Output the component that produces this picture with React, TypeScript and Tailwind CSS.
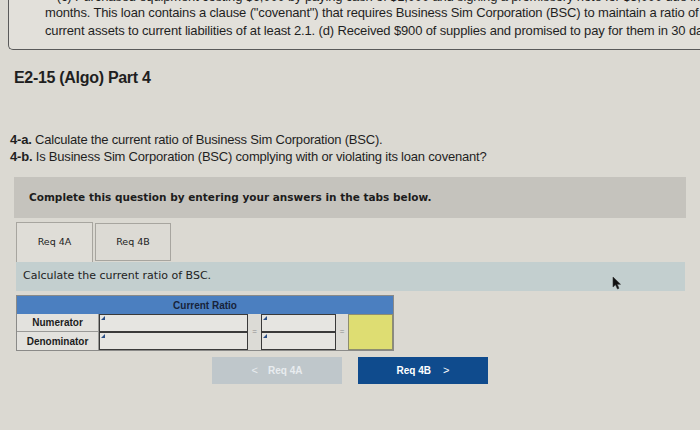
import React from "react";

function Cursor() {
  return (
    <svg width="10" height="14" viewBox="0 0 10 14" className="absolute left-[612px] top-[276px]">
      <path d="M1 1 L1 11 L3.5 8.8 L5.5 13 L7 12.3 L5.2 8.3 L8.5 8.3 Z" fill="#111" stroke="#333" strokeWidth="0.6" />
    </svg>
  );
}

function InputCell({ className }: { className?: string }) {
  return (
    <div className={"relative border-[1.5px] border-[#3a3a3a] bg-[#e6e5e1] " + (className ?? "")}>
      <div className="absolute left-[1px] top-[1px] h-0 w-0 rotate-90 border-l-[4px] border-t-[4px] border-l-transparent border-t-[#2b4f86]" />
    </div>
  );
}

export default function App() {
  return (
    <div className="relative h-[430px] w-[700px] overflow-hidden bg-[#dbd9d2] font-['Liberation_Sans',Arial,sans-serif] text-[#1f1f1f]">
      {/* problem statement box (clipped at top) */}
      <div className="-mr-6 ml-[8px] h-[50px] overflow-hidden rounded-bl-[5px] border-b-[1.5px] border-l-[1.5px] border-[#5a5a5a] bg-[#e2e0da] pl-[36px]">
        <div className="-mt-[12px] text-[13px] leading-[18px] tracking-[-0.15px]">
          <div className="flex justify-end whitespace-nowrap pr-[24px]">
            (c) Purchased equipment costing $6,000 by paying cash of $1,000 and signing a promissory note for $5,000 due in
          </div>
          <div className="-mt-[2px] whitespace-nowrap">
            months. This loan contains a clause ("covenant") that requires Business Sim Corporation (BSC) to maintain a ratio of
          </div>
          <div className="whitespace-nowrap">
            current assets to current liabilities of at least 2.1. (d) Received $900 of supplies and promised to pay for them in 30 days.
          </div>
        </div>
      </div>

      <div className="pl-[14px] pt-[19px] text-[16px] font-bold leading-[18px] tracking-[-0.3px]">E2-15 (Algo) Part 4</div>

      <div className="pl-[10px] pt-[44px] text-[13px] leading-[17px] tracking-[-0.2px]">
        <div>
          <span className="font-bold">4-a.</span> Calculate the current ratio of Business Sim Corporation (BSC).
        </div>
        <div>
          <span className="font-bold">4-b.</span> Is Business Sim Corporation (BSC) complying with or violating its loan covenant?
        </div>
      </div>

      <div className="ml-[14px] mr-[14px] mt-[12px] flex h-[41px] items-center bg-[#c5c3bd] pl-[15px] font-['DejaVu_Sans',Verdana,sans-serif] text-[10.5px] font-bold text-[#1c1c1c]">
        Complete this question by entering your answers in the tabs below.
      </div>

      <div className="ml-[16px] mr-[15px] mt-[4px] flex items-end gap-[2px] font-['DejaVu_Sans',Verdana,sans-serif] text-[9.5px] text-[#222]">
        <div className="flex h-[40px] w-[77px] items-center justify-center border border-b-0 border-[#a7a59f] bg-[#dfddd7]">Req 4A</div>
        <div className="mb-[1px] flex h-[38px] w-[76px] items-center justify-center border border-[#a7a59f] bg-[#dcdad4]">Req 4B</div>
      </div>

      <div className="ml-[16px] mr-[15px] flex h-[29px] items-center bg-[#c3cfcf] pl-[7px] font-['DejaVu_Sans',Verdana,sans-serif] text-[11px] text-[#222]">
        Calculate the current ratio of BSC.
      </div>

      {/* ratio table */}
      <div className="ml-[16px] mt-[4px] w-[378px] border border-[#8a8a88]">
        <div className="flex h-[18px] items-center justify-center bg-[#4b7fc0] text-[10px] font-bold text-[#17233a]">Current Ratio</div>
        <div className="grid grid-cols-[82px_149px_13px_75px_12px_1fr] grid-rows-[18px_18px] text-[10px] font-bold text-[#1c1c1c]">
          <div className="flex items-center justify-center border-b border-r border-[#9a9a98] bg-[#e3e2de]">Numerator</div>
          <InputCell />
          <div className="row-span-2 flex items-center justify-center bg-[#dcdbd6] text-[8px] font-normal text-[#8a8a8a]">=</div>
          <InputCell />
          <div className="row-span-2 flex items-center justify-center bg-[#dcdbd6] text-[8px] font-normal text-[#8a8a8a]">=</div>
          <div className="row-span-2 border border-[#8d8d70] bg-[#dedd72]" />
          <div className="flex items-center justify-center border-r border-[#9a9a98] bg-[#e3e2de]">Denominator</div>
          <InputCell />
          <InputCell />
        </div>
      </div>

      <div className="ml-[212px] mt-[6px] flex gap-[16px] text-[10px] font-bold">
        <div className="flex h-[27px] w-[130px] items-center justify-center gap-[10px] bg-[#bfc7cb] text-[#e8ecef]">
          <span className="text-[11px] font-normal">&lt;</span>
          <span>Req 4A</span>
        </div>
        <div className="flex h-[27px] w-[130px] items-center justify-center gap-[12px] bg-[#0f4b8d] text-white">
          <span>Req 4B</span>
          <span className="text-[11px] font-normal">&gt;</span>
        </div>
      </div>

      <Cursor />
    </div>
  );
}
